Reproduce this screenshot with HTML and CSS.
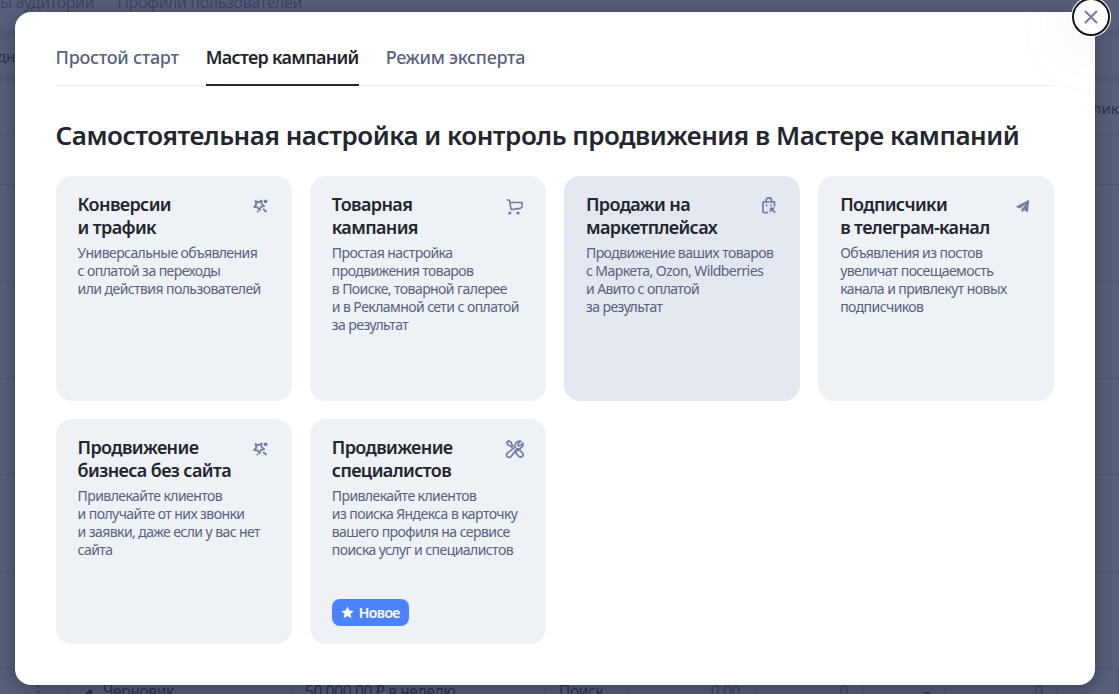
FILE: index.html
```
<!DOCTYPE html>
<html lang="ru">
<head>
<meta charset="utf-8">
<title>Мастер кампаний</title>
<link rel="stylesheet" href="styles.css">
</head>
<body>
<svg class="sprite" width="0" height="0">
	<symbol id="i-star" viewBox="0 0 16 16">
		<path d="M8.600 2.500L8.500 5.900 11.100 8.100 7.800 9 6.500 12.200 4.600 9.300 1.200 9.100 3.400 6.400 2.500 3.100 5.700 4.300z" fill="none" stroke="currentColor" stroke-width="1.800" stroke-linejoin="round"/>
		<circle cx="12.600" cy="3.300" r="1.900" fill="currentColor"/>
		<path d="M10.200 10.900l3.300 3.200" stroke="currentColor" stroke-width="2"/>
		<circle cx="4.500" cy="13.500" r=".9" fill="currentColor"/>
	</symbol>
	<symbol id="i-cart" viewBox="0 0 18 18">
		<path d="M.8 2h2.600l1.800 9.600 9-1.200 1.800-1.400V4.500H4" fill="none" stroke="currentColor" stroke-width="1.600" stroke-linejoin="round"/>
		<circle cx="3.800" cy="15" r="1.600" fill="currentColor"/>
		<circle cx="12" cy="15" r="1.600" fill="currentColor"/>
	</symbol>
	<symbol id="i-bag" viewBox="0 0 16 18">
		<path d="M7 15.700H3.500A1.500 1.500 0 0 1 2 14.200V5h11.500v4.500M5 5V3.600a2.800 2.800 0 0 1 5.600 0V5" fill="none" stroke="currentColor" stroke-width="1.700"/>
		<path d="M5.500 7.300v2.200M10 7.300v2.200" stroke="currentColor" stroke-width="1.400"/>
		<path d="M8.800 10.500h5.500l-2 1.700 2.500 2.700-1.300 1.300-2.600-2.500-2.100 2z" fill="currentColor"/>
	</symbol>
	<symbol id="i-plane" viewBox="0 0 16 16">
		<path d="M.8 8.700L14.200 1.800 12.900 14.300 9.200 12.200 7 14.300 6.200 11.500 10.800 6 4.700 10.500z" fill="currentColor"/>
	</symbol>
	<symbol id="i-tools" viewBox="0 0 20 20">
		<g fill="none" stroke="currentColor" stroke-width="1.700" stroke-linejoin="round">
			<path d="M8.800 7.400L6.700 5.300 6.200 3.400 3.500 1.800 1.800 3.500 3.400 6.200 5.300 6.700 7.400 8.800"/>
			<path d="M11.500 11.500c1.200-1 2.700-.8 3.700.2l2.200 2.200a2.450 2.450 0 0 1-3.500 3.500l-2.200-2.200c-1-1-1.200-2.500-.2-3.700z"/>
			<path d="M15.800 2.200a4.400 4.400 0 0 0-5.300 5.700L2.600 13.900a2.500 2.500 0 1 0 3.500 3.500l6-7.900a4.400 4.400 0 0 0 5.700-5.300L15 7l-1.700-.3L13 5z"/>
		</g>
	</symbol>
</svg>

<div class="page">
	<div class="page_tabs"><span>ы аудитории</span><span>Профили пользователей</span></div>
	<div class="page_filter"><span>дней</span></div>
	<div class="page_head"><span>лики</span></div>
	<div class="page_row row_small"></div>
	<div class="page_row"></div>
	<div class="page_row"></div>
	<div class="page_row"></div>
	<div class="page_row"></div>
	<div class="page_row"></div>
	<div class="page_row row_data">
		<span class="dots">⋮</span>
		<span class="status"><svg width="14" height="14" viewBox="0 0 14 14"><path d="M2 12l1-4 6-6 3 3-6 6z" fill="currentColor"/></svg>Черновик</span>
		<span>50 000,00 ₽ в неделю</span>
		<span>Поиск</span>
		<span class="num pale">0,00</span>
		<span class="num pale">0</span>
		<span class="num">–</span>
		<span class="num pale">0</span>
		<span></span>
	</div>
</div>

<div class="modal">
	<div class="modal_corner"></div>
	<button class="close" aria-label="Закрыть"><svg width="14" height="14" viewBox="0 0 14 14"><path d="M1.500 1.500l11 11M12.500 1.500l-11 11" stroke="currentColor" stroke-width="2" stroke-linecap="round"/></svg></button>

	<div class="tabs">
		<a class="tab">Простой старт</a>
		<a class="tab active">Мастер кампаний</a>
		<a class="tab">Режим эксперта</a>
	</div>

	<h1>Самостоятельная настройка и контроль продвижения в Мастере кампаний</h1>

	<div class="cards">
		<div class="card">
			<h2>Конверсии<br>и трафик</h2>
			<p>Универсальные объявления<br>с оплатой за переходы<br>или действия пользователей</p>
			<svg class="icon" width="16" height="16"><use href="#i-star"/></svg>
		</div>
		<div class="card">
			<h2>Товарная<br>кампания</h2>
			<p>Простая настройка<br>продвижения товаров<br>в Поиске, товарной галерее<br>и в Рекламной сети с оплатой<br>за результат</p>
			<svg class="icon icon_cart" width="18" height="18"><use href="#i-cart"/></svg>
		</div>
		<div class="card hover">
			<h2>Продажи на<br>маркетплейсах</h2>
			<p>Продвижение ваших товаров<br>с Маркета, Ozon, Wildberries<br>и Авито с оплатой<br>за результат</p>
			<svg class="icon icon_bag" width="16" height="18"><use href="#i-bag"/></svg>
		</div>
		<div class="card">
			<h2>Подписчики<br>в телеграм-канал</h2>
			<p>Объявления из постов<br>увеличат посещаемость<br>канала и привлекут новых<br>подписчиков</p>
			<svg class="icon" width="16" height="16"><use href="#i-plane"/></svg>
		</div>
		<div class="card">
			<h2>Продвижение<br>бизнеса без сайта</h2>
			<p>Привлекайте клиентов<br>и получайте от них звонки<br>и заявки, даже если у вас нет<br>сайта</p>
			<svg class="icon" width="16" height="16"><use href="#i-star"/></svg>
		</div>
		<div class="card">
			<h2>Продвижение<br>специалистов</h2>
			<p>Привлекайте клиентов<br>из поиска Яндекса в карточку<br>вашего профиля на сервисе<br>поиска услуг и специалистов</p>
			<svg class="icon icon_tools" width="20" height="20"><use href="#i-tools"/></svg>
			<span class="badge"><svg width="13" height="13" viewBox="0 0 13 13"><path d="M6.500.4l1.900 4 4.300.5-3.200 3 .9 4.400-3.900-2.200-3.900 2.200.9-4.400-3.200-3 4.300-.5z" fill="currentColor"/></svg>Новое</span>
		</div>
	</div>
</div>
</body>
</html>
```
FILE: styles.css
```
html, body, h1, h2, p {
	padding: 0;
	margin: 0;
}

body {
	height: 694px;
	overflow: hidden;
	background: #58617b;
	font-family: "Noto Sans", sans-serif;
	position: relative;
}

.sprite {
	position: absolute;
}

/* страница под затемнением */
.page {
	height: 694px;
	overflow: hidden;
	font-size: 15px;
	color: #2c334a;
	white-space: nowrap;
}

.page_tabs {
	height: 30px;
	display: flex;
	gap: 23px;
	line-height: 5px;
	font-size: 16px;
	color: #3c4764;
	letter-spacing: -.38px;
}

.page_filter {
	height: 36px;
	border-top: 8px solid #535d78;
	border-bottom: 8px solid #535d78;
	line-height: 36px;
}

.page_filter span {
	margin-left: -3px;
}

.page_head {
	height: 52px;
	line-height: 52px;
	text-align: right;
}

.page_head span {
	margin-right: -9px;
}

.page_row {
	height: 95.8px;
	border-top: 1px solid #4e5772;
}

.row_small {
	height: 49px;
}

.row_data {
	display: grid;
	grid-template-columns: 67px 224px 254px 85px 125px 108px 82px 113px 1fr;
	height: 45px;
	line-height: 45px;
	font-size: 15.5px;
	letter-spacing: -.35px;
}

.row_data span {
	padding: 0 14px;
	border-right: 1px solid #4e5772;
}

.row_data .dots {
	text-align: right;
	padding-right: 20px;
}

.row_data .num {
	text-align: right;
}

.pale {
	color: #3f4966;
}

.status svg {
	margin-right: 8px;
	vertical-align: -4px;
}

/* окно */
.modal {
	position: absolute;
	left: 15px;
	top: 12px;
	width: 1080px;
	height: 673px;
	box-sizing: border-box;
	padding: 32px 40px 0 40.6px;
	border-radius: 16px;
	background: #fff;
	box-shadow: 0 4px 20px rgba(20, 25, 40, .45);
}

.modal_corner {
	position: absolute;
	right: 0;
	top: 0;
	width: 70px;
	height: 84px;
	background: radial-gradient(circle at 67px 13px, #f7f8fa 0, #fefefe 44px, #fff 49px, #fcfcfc 50px, #fff 55px, #fff 64px, #fcfcfc 66px, #fff 69px);
}

.close {
	position: absolute;
	right: -15px;
	top: -14px;
	width: 38px;
	height: 38px;
	padding: 0;
	display: flex;
	align-items: center;
	justify-content: center;
	border: 2px solid #16171a;
	border-radius: 50%;
	background: #fff;
	color: #727c9e;
	box-shadow: 0 0 0 1px #fff, inset 0 0 0 1px #fff;
}

.tabs {
	position: relative;
	display: flex;
	gap: 27px;
	height: 41px;
	border-bottom: 1px solid #eeeff1;
}

.tab {
	height: 40px;
	line-height: 27px;
	font-size: 18px;
	font-weight: 500;
	letter-spacing: -.3px;
	color: #58627f;
	white-space: nowrap;
	border-bottom: 2px solid transparent;
}

.tab.active {
	font-weight: 600;
	letter-spacing: -.7px;
	color: #23252f;
	border-color: #23252f;
}

h1 {
	margin-top: 29px;
	line-height: 40px;
	font-size: 26px;
	font-weight: 600;
	letter-spacing: -.48px;
	white-space: nowrap;
	color: #23252f;
}

.cards {
	display: grid;
	grid-template-columns: repeat(4, 236.2px);
	grid-auto-rows: 225px;
	gap: 18px;
	margin-top: 21px;
}

.card {
	position: relative;
	box-sizing: border-box;
	padding: 17px 22px;
	border-radius: 16px;
	background: #eef1f6;
	white-space: nowrap;
}

.card.hover {
	background: #e3e7ef;
}

.card h2 {
	line-height: 23px;
	font-size: 18px;
	font-weight: 600;
	letter-spacing: -.62px;
	color: #23252f;
}

.card p {
	margin-top: 5px;
	line-height: 18px;
	font-size: 14px;
	letter-spacing: -.57px;
	color: #58627f;
}

.icon {
	position: absolute;
	right: 23px;
	top: 22px;
	color: #727fa3;
}

.icon_cart {
	right: 22px;
}

.icon_bag {
	top: 21px;
}

.icon_tools {
	right: 21px;
	top: 20px;
}

.badge {
	position: absolute;
	left: 22px;
	bottom: 18px;
	height: 27px;
	width: 77px;
	display: flex;
	align-items: center;
	justify-content: center;
	gap: 5px;
	border-radius: 8px;
	background: #4b83ff;
	color: #fff;
	font-size: 14px;
	font-weight: 600;
	letter-spacing: -.6px;
}
```
